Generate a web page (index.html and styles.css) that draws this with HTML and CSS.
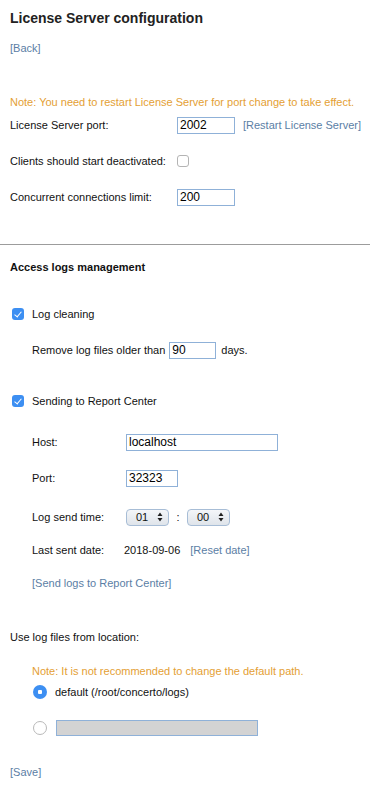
FILE: index.html
```html
<!DOCTYPE html>
<html lang="en">
<head>
    <meta charset="UTF-8">
    <meta name="viewport" content="width=device-width, initial-scale=1.0">
    <title>License Server configuration</title>
    <link rel="stylesheet" href="styles.css">
</head>
<body>
    <div class="section">
        <h1>License Server configuration</h1>
        <a class="link back" href="#">[Back]</a>
        <div class="note note-top">Note: You need to restart License Server for port change to take effect.</div>

        <div class="row row-port">
            <span class="label">License Server port:</span>
            <input class="field field-port" type="text" value="2002">
            <a class="link restart" href="#">[Restart License Server]</a>
        </div>
        <div class="row row-gap">
            <span class="label">Clients should start deactivated:</span>
            <span class="check"></span>
        </div>
        <div class="row row-gap">
            <span class="label">Concurrent connections limit:</span>
            <input class="field field-port" type="text" value="200">
        </div>
    </div>

    <hr class="divider">

    <div class="section">
        <div class="row subtitle">Access logs management</div>

        <div class="row row-toggle">
            <span class="check checked"></span>
            <span>Log cleaning</span>
        </div>
        <div class="row indent row-gap">
            <span>Remove log files older than</span>
            <input class="field field-days" type="text" value="90">
            <span class="days">days.</span>
        </div>

        <div class="row row-toggle row-sending">
            <span class="check checked"></span>
            <span>Sending to Report Center</span>
        </div>
        <div class="row indent row-host">
            <span class="sub-label">Host:</span>
            <input class="field field-host" type="text" value="localhost">
        </div>
        <div class="row indent row-gap">
            <span class="sub-label">Port:</span>
            <input class="field field-rc-port" type="text" value="32323">
        </div>
        <div class="row indent row-time">
            <span class="sub-label">Log send time:</span>
            <span class="select">01<svg width="6" height="10" viewBox="0 0 6 10"><path d="M3 0.5L5.5 4H0.5z M3 9.5L5.5 6H0.5z" fill="#222"/></svg></span>
            <span class="colon">:</span>
            <span class="select">00<svg width="6" height="10" viewBox="0 0 6 10"><path d="M3 0.5L5.5 4H0.5z M3 9.5L5.5 6H0.5z" fill="#222"/></svg></span>
        </div>
        <div class="row indent row-sent">
            <span class="sub-label">Last sent date:</span>
            <span class="date">2018-09-06</span>
            <a class="link" href="#">[Reset date]</a>
        </div>
        <div class="row indent row-sent">
            <a class="link" href="#">[Send logs to Report Center]</a>
        </div>

        <div class="row row-location">Use log files from location:</div>
        <div class="row indent note note-path">Note: It is not recommended to change the default path.</div>
        <div class="row indent row-radio">
            <span class="radio selected"></span>
            <span>default (/root/concerto/logs)</span>
        </div>
        <div class="row indent row-gap">
            <span class="radio"></span>
            <input class="field field-path" type="text" value="" disabled>
        </div>

        <div class="row row-save">
            <a class="link" href="#">[Save]</a>
        </div>
    </div>
</body>
</html>
```

FILE: styles.css
```css
body {
    margin: 0;
    font-family: 'Liberation Sans', Arial, Helvetica, sans-serif;
    font-size: 11px;
    color: #111;
    background: #fff;
}
.section {
    padding: 0 10px;
}
h1 {
    margin: 8px 0 0;
    font-size: 14px;
    line-height: 20px;
    font-weight: bold;
    color: #222;
}
.link {
    color: #5b7ea5;
    text-decoration: none;
    white-space: nowrap;
}
.back {
    display: block;
    margin-top: 10px;
    line-height: 20px;
}
.note {
    color: #e4a034;
    line-height: 20px;
}
.note-top {
    margin-top: 34px;
}
.row {
    display: flex;
    align-items: center;
    height: 20px;
    white-space: nowrap;
}
.row-port {
    margin-top: 3px;
}
.row-gap {
    margin-top: 16px;
}
.label {
    width: 167px;
    flex-shrink: 0;
}
.field {
    box-sizing: border-box;
    height: 17px;
    padding: 0 2px;
    border: 1px solid #8fb1d8;
    font-family: inherit;
    font-size: 12px;
    color: #000;
    background: #fff;
    outline: none;
}
.field-port {
    width: 58px;
}
.restart {
    margin-left: 8px;
}
.check {
    box-sizing: border-box;
    width: 12px;
    height: 12px;
    border: 1px solid #b4b4b4;
    border-radius: 3px;
    background: #fff;
    flex-shrink: 0;
}
.check.checked {
    position: relative;
    border: none;
    background: #3d8ff2;
    margin: 0 8px 0 2px;
}
.check.checked::after {
    content: "";
    position: absolute;
    left: 4px;
    top: 2px;
    width: 3px;
    height: 6px;
    border: solid #fff;
    border-width: 0 1.5px 1.5px 0;
    transform: rotate(40deg);
}
.divider {
    margin: 37px 0 0;
    border: none;
    border-top: 1px solid #9c9c9c;
    height: 0;
}
.subtitle {
    margin-top: 12px;
    font-weight: bold;
    font-size: 11px;
}
.row-toggle {
    margin-top: 27px;
}
.row-sending {
    margin-top: 31px;
}
.indent {
    padding-left: 22px;
}
.field-days {
    width: 47px;
    margin: 0 5px 0 4px;
}
.sub-label {
    width: 94px;
    flex-shrink: 0;
}
.row-host {
    margin-top: 21px;
}
.field-host {
    width: 152px;
}
.field-rc-port {
    width: 52px;
}
.row-time {
    margin-top: 19px;
}
.select {
    box-sizing: border-box;
    display: inline-flex;
    align-items: center;
    justify-content: space-between;
    width: 43px;
    height: 17px;
    padding: 0 5px 0 9px;
    border: 1px solid #a7bdd6;
    border-radius: 4px;
    background: linear-gradient(#f4f6f9, #dfe4ea);
    font-size: 11px;
}
.colon {
    width: 18px;
    text-align: center;
}
.row-sent {
    margin-top: 13px;
}
.date {
    margin-left: -2px;
    margin-right: 10px;
}
.row-location {
    margin-top: 34px;
}
.note-path {
    margin-top: 14px;
    height: 20px;
}
.row-radio {
    margin-top: 1px;
}
.radio {
    box-sizing: border-box;
    width: 14px;
    height: 14px;
    margin: 0 9px 0 1px;
    border: 1px solid #b9b9b9;
    border-radius: 50%;
    background: #fff;
    flex-shrink: 0;
}
.radio.selected {
    border: none;
    margin-right: 8px;
    background: radial-gradient(circle, #fff 0 2px, #3d8ff2 2.5px);
}
.field-path {
    width: 202px;
    height: 16px;
    background: #d3d3d3;
}
.row-save {
    margin-top: 24px;
}
```
